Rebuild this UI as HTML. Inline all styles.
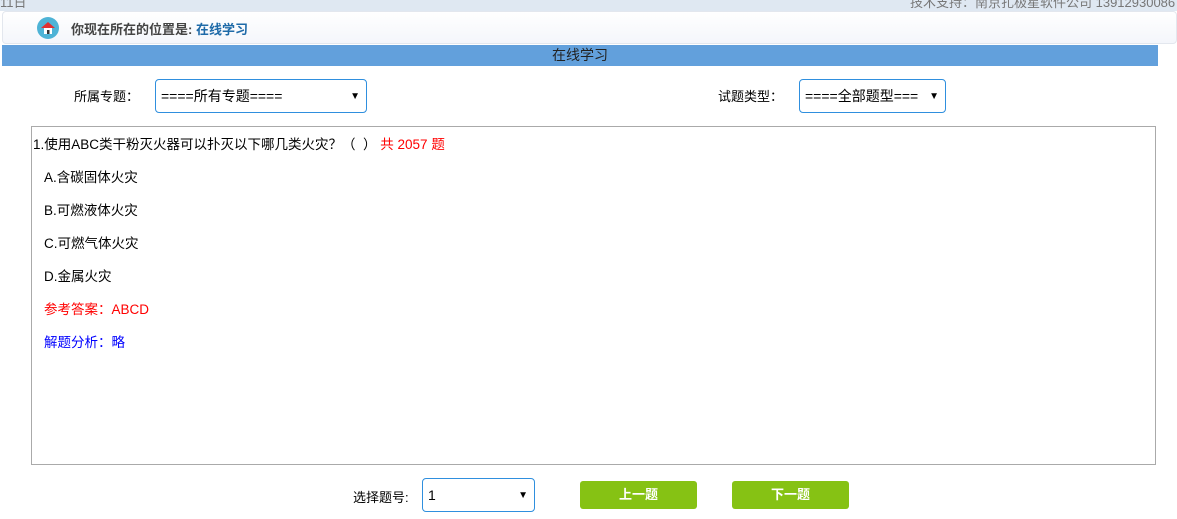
<!DOCTYPE html>
<html><head><meta charset="utf-8"><style>
*{box-sizing:border-box;margin:0;padding:0}
body{width:1177px;height:519px;overflow:hidden;background:#fff;font-family:"Liberation Sans","Noto Sans CJK SC",sans-serif;font-size:13px;color:#000;position:relative}
.abs{position:absolute}
.top{left:0;top:0;width:1177px;height:11px;background:#dfe8f2;overflow:hidden}
.top span{position:absolute;top:-8px;font-size:13px;color:#777}
.crumb{left:2px;top:11px;width:1175px;height:33px;border:1px solid #e3e7ee;border-radius:4px;background:linear-gradient(#fff,#f4f6fb)}
.bar{left:2px;top:45px;width:1156px;height:21px;background:#62a0dc;color:#222;text-align:center;font-size:14px;line-height:21px}
.sel{border:1px solid #2f8fde;border-radius:4px;height:34px;background:#fff;font-size:14px;line-height:32px;padding-left:5px}
.sel i{position:absolute;right:6px;top:1px;font-style:normal;font-size:10px}
.box{left:31px;top:126px;width:1125px;height:339px;border:1px solid #aaa}
.q{position:absolute;left:12px;font-size:13.5px}
.btn{top:481px;width:117px;height:28px;background:#86c214;border-radius:3px;color:#fff;font-weight:bold;text-align:center;line-height:28px;font-size:13px}
</style></head><body>
<div class="abs top"><span style="left:0">11日</span><span style="left:910px">技术支持：南京扎极星软件公司 13912930086</span></div>
<div class="abs crumb"></div>
<svg class="abs" style="left:36px;top:16px" width="24" height="24"><circle cx="12" cy="12" r="11" fill="#4eb3d6"/><path d="M5 12 L12 6 L19 12 Z" fill="#e03030"/><rect x="8" y="12" width="8" height="6" fill="#fff"/><rect x="11" y="14" width="2.5" height="4" fill="#333"/></svg>
<div class="abs" style="left:71px;top:19px;font-size:13px;font-weight:bold;color:#444">你现在所在的位置是: <span style="color:#1e6aa8">在线学习</span></div>
<div class="abs bar">在线学习</div>
<div class="abs" style="left:74px;top:86px;font-size:13px">所属专题：</div>
<div class="abs sel" style="left:155px;top:79px;width:212px">====所有专题====<i>▼</i></div>
<div class="abs" style="left:718px;top:86px;font-size:13px">试题类型：</div>
<div class="abs sel" style="left:799px;top:79px;width:147px">====全部题型===<i>▼</i></div>
<div class="abs box">
<div class="q" style="left:1px;top:6px">1.使用ABC类干粉灭火器可以扑灭以下哪几类火灾？（ &nbsp;） <span style="color:#f00">共 2057 题</span></div>
<div class="q" style="top:39px">A.含碳固体火灾</div>
<div class="q" style="top:72px">B.可燃液体火灾</div>
<div class="q" style="top:105px">C.可燃气体火灾</div>
<div class="q" style="top:138px">D.金属火灾</div>
<div class="q" style="top:171px;color:#f00">参考答案：ABCD</div>
<div class="q" style="top:204px;color:#00f">解题分析：略</div>
</div>
<div class="abs" style="left:353px;top:487px;font-size:13px">选择题号:</div>
<div class="abs sel" style="left:422px;top:478px;width:113px">1<i>▼</i></div>
<div class="abs btn" style="left:580px">上一题</div>
<div class="abs btn" style="left:732px">下一题</div>
</body></html>
